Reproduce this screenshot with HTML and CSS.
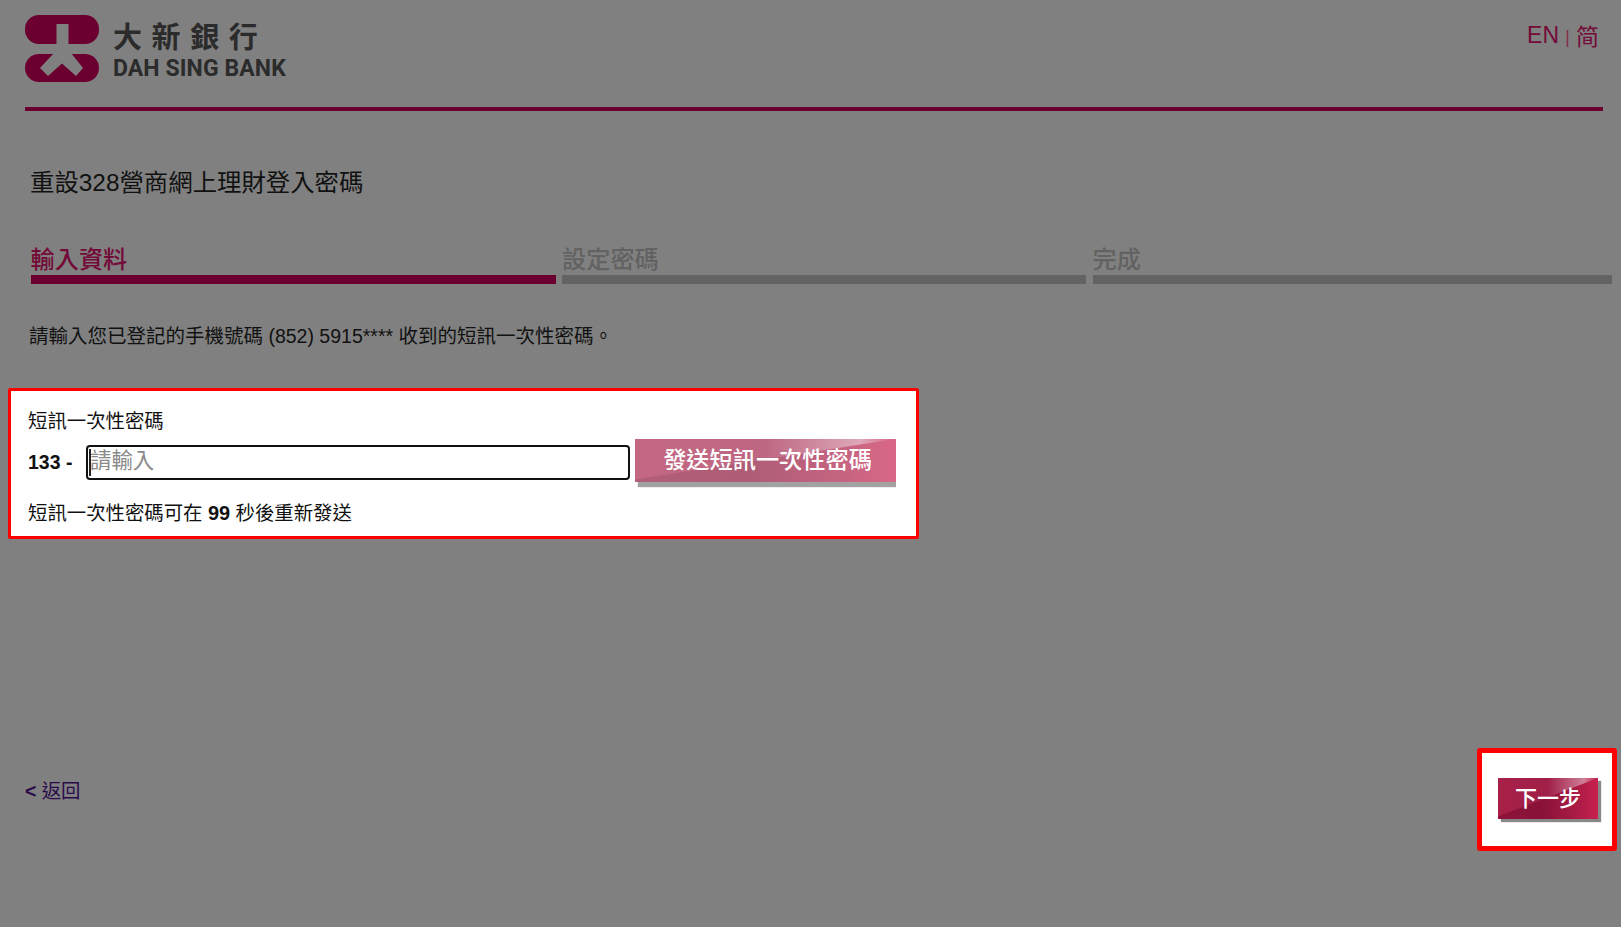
FILE: index.html
```html
<!DOCTYPE html>
<html lang="zh-Hant">
<head>
<meta charset="utf-8">
<title>重設328營商網上理財登入密碼</title>
<link rel="stylesheet" href="styles.css">
</head>
<body>
<div class="page">
  <header class="header">
    <div class="brand">
      <svg class="logo" width="74" height="67" viewBox="25 15 74 67" aria-hidden="true">
        <rect x="25" y="15" width="74" height="29" rx="14" fill="#6b0030"/>
        <rect x="25" y="54" width="74" height="28" rx="14" fill="#6b0030"/>
        <rect x="56.5" y="24" width="12" height="21" fill="#808080"/>
        <polygon points="54,53 71,53 83,68 76,76 62,63.5 48,76 40,68" fill="#808080"/>
      </svg>
      <div class="brand-text">
        <div class="brand-zh">大新銀行</div>
        <div class="brand-en">DAH SING BANK</div>
      </div>
    </div>
    <nav class="lang"><a>EN</a><span class="sep">|</span><a>简</a></nav>
  </header>

  <h1 class="title">重設328營商網上理財登入密碼</h1>

  <ol class="steps">
    <li class="step active"><span>輸入資料</span></li>
    <li class="step"><span>設定密碼</span></li>
    <li class="step"><span>完成</span></li>
  </ol>

  <p class="intro">請輸入您已登記的手機號碼 (852) 5915**** 收到的短訊一次性密碼。</p>

  <section class="otp">
    <label class="otp-label" for="otp">短訊一次性密碼</label>
    <div class="otp-row">
      <span class="prefix">133 -</span>
      <div class="field">
        <input id="otp" class="otp-input" type="text" placeholder="請輸入">
        <i class="caret"></i>
      </div>
      <button class="btn btn-send" type="button"><span>發送短訊一次性密碼</span></button>
    </div>
    <p class="otp-note">短訊一次性密碼可在 <b>99</b> 秒後重新發送</p>
  </section>

  <footer class="footer">
    <a class="back"><b>&lt;</b> 返回</a>
    <div class="next-box">
      <button class="btn btn-next" type="button"><span>下一步</span></button>
    </div>
  </footer>
</div>
</body>
</html>
```
FILE: styles.css
```css
* { box-sizing: border-box; }
html, body { margin: 0; height: 100%; background: #808080; }
body {
  font-family: "Liberation Sans", "Noto Sans CJK TC", sans-serif;
  color: #111;
  overflow: hidden;
}
.page { height: 927px; }

.header {
  display: flex;
  justify-content: space-between;
  height: 111px;
  margin: 0 18px 0 25px;
  border-bottom: 4px solid #6b0030;
  padding-top: 15px;
}
.brand { display: flex; align-items: flex-start; }
.logo { display: block; flex: none; }
.brand-text { margin-left: 14px; color: #2b2b2b; }
.brand-zh {
  font-size: 29px;
  line-height: 36px;
  letter-spacing: 9.6px;
  font-weight: 700;
  margin-top: 5px;
}
.brand-en {
  font-family: Roboto, sans-serif;
  font-weight: 700;
  font-size: 23px;
  line-height: 24px;
  letter-spacing: .1px;
  margin-top: 1px;
}
.lang {
  display: flex;
  align-items: center;
  height: 40px;
  color: #730a38;
  font-size: 23px;
  margin-right: 4px;
}
.lang a { color: inherit; }
.lang .sep { font-size: 19px; margin: 3px 6px 0 6px; color: #86304f; }

.title {
  margin: 57px 0 0 30px;
  font-size: 24.4px;
  line-height: 30px;
  font-weight: 400;
  color: #111;
}

.steps {
  list-style: none;
  display: grid;
  grid-template-columns: 525px 524px 519.5px;
  column-gap: 6.5px;
  margin: 47px 0 0 30.5px;
  padding: 0;
}
.step {
  font-size: 24.2px;
  line-height: 30px;
  font-weight: 500;
  color: #626262;
  border-bottom: 9px solid #636363;
}
.step span { display: block; }
.step.active { color: #730a38; border-bottom-color: #6b0030; }

.intro {
  margin: 40px 0 0 29px;
  font-size: 19.5px;
  line-height: 24px;
  color: #111;
}

.otp {
  width: 911px;
  height: 151px;
  margin: 40px 0 0 8px;
  padding: 18px 17px 11px;
  background: #fff;
  border: 3px solid #f00;
  border-radius: 2px;
  color: #111;
}
.otp-label { display: block; font-size: 19.4px; line-height: 24px; }
.otp-row { display: flex; align-items: flex-start; margin-top: 6px; }
.prefix {
  width: 58px;
  margin-top: 11px;
  font-size: 19.5px;
  line-height: 24px;
  font-weight: 700;
}
.field { position: relative; margin-top: 6px; }
.otp-input {
  display: block;
  width: 544px;
  height: 35px;
  padding: 0 3px 2px 2px;
  border: 2.5px solid #111;
  border-radius: 4px;
  outline: 0;
  background: #fff;
  font: 400 21.4px "Liberation Sans", "Noto Sans CJK TC", sans-serif;
}
.otp-input::placeholder { color: #8a8a8a; opacity: 1; }
.caret {
  position: absolute;
  left: 3px;
  top: 4px;
  width: 1.5px;
  height: 27px;
  background: #222;
}
.otp-note { margin: 19px 0 0; font-size: 19.4px; line-height: 24px; }
.otp-note b { font-size: 20px; }

.btn {
  position: relative;
  display: block;
  border: 0;
  border-radius: 0;
  padding: 0;
  color: #fff;
  font-family: "Liberation Sans", "Noto Sans CJK TC", sans-serif;
  font-weight: 500;
  text-align: center;
  background: linear-gradient(90deg, #8c1238 0%, #8a1238 45%, #ac1c46 80%, #c8204f 100%);
}
.btn::before {
  content: "";
  position: absolute;
  inset: 0;
  clip-path: polygon(0 0, 100% 0, 0 94%);
  background: linear-gradient(90deg, #a82048 0%, #a02048 50%, #cf7f98 86%, #c8204f 99%);
}
.btn span { position: relative; }
.btn-send {
  width: 261px;
  height: 43px;
  margin-left: 5px;
  font-size: 23.2px;
  line-height: 41px;
  opacity: .68;
  box-shadow: 3px 5px 1px #777;
  clip-path: inset(0 0 -6px 0);
  flex: none;
}
.btn-send span { left: 2px; }
.btn-next {
  width: 100px;
  height: 41px;
  font-size: 22px;
  line-height: 41px;
  box-shadow: 3px 3px 1px #888;
}

.footer {
  display: flex;
  justify-content: space-between;
  align-items: flex-start;
  margin-top: 209px;
  padding: 0 4px 0 25px;
}
.back {
  margin-top: 31px;
  font-size: 19.4px;
  line-height: 24px;
  color: #2a0a4a;
}
.next-box {
  width: 140px;
  height: 103px;
  padding: 25px 0 0 16px;
  background: #fff;
  border: 5px solid #f00;
  border-radius: 3px;
}
```
